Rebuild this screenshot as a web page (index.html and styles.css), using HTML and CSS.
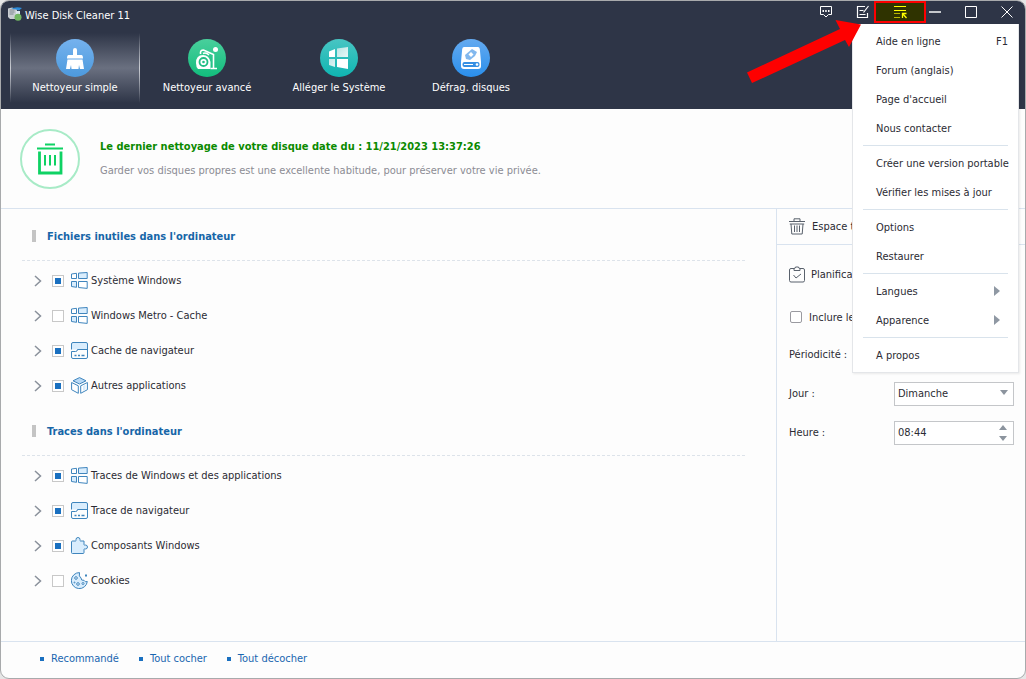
FILE: index.html
```html
<!DOCTYPE html>
<html lang="fr">
<head>
<meta charset="utf-8">
<title>Wise Disk Cleaner 11</title>
<link rel="stylesheet" href="styles.css">
</head>
<body>
<svg width="0" height="0" class="defs" aria-hidden="true">
  <defs>
    <linearGradient id="g-blue" x2="0" y2="1"><stop offset="0" stop-color="#75b2ee"/><stop offset="1" stop-color="#4d9add"/></linearGradient>
    <linearGradient id="g-green" x2="0" y2="1"><stop offset="0" stop-color="#49cf9c"/><stop offset="1" stop-color="#12bd7d"/></linearGradient>
    <linearGradient id="g-teal" x2="0" y2="1"><stop offset="0" stop-color="#48c5c3"/><stop offset="1" stop-color="#0fb5b1"/></linearGradient>
    <linearGradient id="g-sky" x2="0" y2="1"><stop offset="0" stop-color="#64aaf0"/><stop offset="1" stop-color="#2a8fec"/></linearGradient>
    <linearGradient id="g-pane" x2="1" y2="1"><stop offset="0" stop-color="#a5dfde"/><stop offset="1" stop-color="#fff"/></linearGradient>
    <symbol id="i-chev" viewBox="0 0 8 12"><path d="M1 1l5.500 5L1 11" fill="none" stroke="#8a919b" stroke-width="1.500"/></symbol>
    <symbol id="i-win" viewBox="0 0 17 17"><g fill="#fff" stroke="#3f85bd"><path d="M.5 2L5.500 1.300V6.500H.5z"/><path d="M7.500 1.100L16.200.5V6.500H7.500z" fill="#d9edfd"/><path d="M.5 9.500H5.500V15.300L.5 14.500z" fill="#d9edfd"/><path d="M7.500 9.500H16.200V16.400L7.500 15.500z"/></g></symbol>
    <symbol id="i-nav" viewBox="0 0 17 17"><path d="M.5 7.500V2Q.5.500 2 .5H15Q16.500.5 16.500 2V7.500z" fill="#d9edfd"/><path d="M.5 7.500V2Q.5.500 2 .5H15Q16.500.5 16.500 2V15Q16.500 16.500 15 16.500H2Q.5 16.500.5 15V9.500H4.500Q6.500 9.500 6.500 7.500H16.500" fill="none" stroke="#3f85bd"/><path d="M3.500 13.500h2m1.500 0h2m1.500 0h3" stroke="#3f85bd" stroke-width="1.500"/></symbol>
    <symbol id="i-cube" viewBox="0 0 17 17"><g fill="#fff" stroke="#3f85bd" stroke-linejoin="round"><path d="M8.500.6L15 3.800L8.500 7L2 3.800z" fill="#b9daf6"/><path d="M.6 5.500L7.300 8.800V16.300L.6 12.700z"/><path d="M16.400 5.500L9.700 8.800V16.300L16.400 12.700z"/><path d="M12 9L14.500 7.800V12.500L12 13.700z" fill="#d9edfd" stroke="none"/></g></symbol>
    <symbol id="i-puz" viewBox="0 0 17 17"><path d="M1.500 4H4.500Q5.300 4 5 2.500Q5 .5 7 .5T9 2.500Q8.800 4 9.500 4H13V7.500Q13 8.500 14.300 8Q16.500 8 16.500 10T14.300 12Q13 11.500 13 12.500V15.500Q13 16.500 12 16.500H1.500Q.5 16.500.5 15.500V5Q.5 4 1.500 4z" fill="#d9edfd" stroke="#3f85bd"/></symbol>
    <symbol id="i-cook" viewBox="0 0 17 17"><path d="M8.500.6A8 8 0 1 0 16.300 9.500Q14 10.500 13 8.300Q10 9 10 6Q7.500 4.500 8.500.6z" fill="#d9edfd" stroke="#3f85bd"/><g fill="#fff" stroke="#3f85bd"><circle cx="5" cy="6" r="1.300"/><circle cx="7" cy="12" r="1.300"/><circle cx="12" cy="11.500" r="1"/><circle cx="3.500" cy="10.500" r=".5"/></g><path d="M14 2.500h2v2h-2z" fill="#3f85bd"/></symbol>
  </defs>
</svg>
<div class="window">
  <header class="top">
    <div class="titlebar">
      <svg class="logo" width="14" height="14" viewBox="0 0 14 14"><path d="M0 1.500L4 .5L9 2V12H2L0 10z" fill="#c9cdd1"/><path d="M1.500 3h5m-5 2h5m-5 2h4" stroke="#7e8790"/><path d="M3 2Q8-1 14 1L11 3.500Q7 1.500 3 2z" fill="#2c8ad8"/><path d="M8 4h4v6H8z" fill="#dce5ec"/><circle cx="10" cy="10.300" r="3.500" fill="#72b762"/></svg>
      <h1 class="title">Wise Disk Cleaner 11</h1>
      <button class="tb" aria-label="Commentaires"><svg width="14" height="14" viewBox="0 0 14 14"><path d="M1.500 1.500h11v8h-3L7 12 4.500 9.500h-3z" fill="none" stroke="#fff"/><path d="M3.500 5h1.500v2H3.500zM6.200 5h1.500v2H6.200zM9 5h1.500v2H9z" fill="#fff"/></svg></button>
      <button class="tb" aria-label="Notes"><svg width="14" height="14" viewBox="0 0 14 14"><path d="M9 1.500H1.500v11h10V8M3.500 5.500h4m-4 4h6M12.500 1L7.500 7.500" fill="none" stroke="#fff" stroke-width="1.200"/></svg></button>
      <button class="tb active" aria-label="Menu" aria-expanded="true"><svg width="14" height="14" viewBox="0 0 14 14"><path d="M1 1.500h12M1 5.500h12" stroke="#ff0"/><path d="M1 8.500h6M1 12.500h6" stroke="#b8b800"/><path d="M9.500 13V8.500H13.500M9.500 8.500l4 4.500" fill="none" stroke="#ff0" stroke-width="1.300"/></svg></button>
      <button class="tb wc min" aria-label="Réduire"><svg width="12" height="12" viewBox="0 0 12 12"><path d="M0 6h12" stroke="#c4c7cc" stroke-width="2"/></svg></button>
      <button class="tb wc" aria-label="Agrandir"><svg width="12" height="12" viewBox="0 0 12 12"><path d="M.5.5h11v11H.5z" fill="none" stroke="#fff"/></svg></button>
      <button class="tb wc" aria-label="Fermer"><svg width="12" height="12" viewBox="0 0 12 12"><path d="M.5.500l11 11m0-11l-11 11" stroke="#fff"/></svg></button>
    </div>
    <nav class="tabs">
      <button class="tab selected"><svg width="38" height="38" viewBox="0 0 38 38"><circle cx="19" cy="19" r="19" fill="url(#g-blue)"/><path d="M17 16V11a2 2 0 0 1 4 0v5h4.500q1.500 0 1.500 3.500H11q0-3.500 1.500-3.500zM11.500 20.500h15l1.500 9.500h-4l-1-4-.5 4h-7l-.5-4-1 4H10z" fill="#fff"/></svg>Nettoyeur simple</button>
      <button class="tab"><svg width="38" height="38" viewBox="0 0 38 38"><circle cx="19" cy="19" r="19" fill="url(#g-green)"/><path d="M8 24Q8 16 15 16Q21 16 22.500 23V30H10Q8 28 8 24z" fill="#fff"/><circle cx="15.500" cy="23" r="4" fill="none" stroke="#22be85" stroke-width="1.800"/><circle cx="15.500" cy="23" r="1.300" fill="#22be85"/><path d="M12.500 15Q12 11 15.500 11L25.500 15.500V29.500M22.500 29.500h6.500M15 14.500Q18 13 21 16" fill="none" stroke="#fff" stroke-width="1.600"/><circle cx="27.500" cy="10.500" r="2.500" fill="#fff"/></svg>Nettoyeur avancé</button>
      <button class="tab"><svg width="38" height="38" viewBox="0 0 38 38"><circle cx="19" cy="19" r="19" fill="url(#g-teal)"/><path d="M9 12.500l6-2.500v8H9z" fill="#fff"/><path d="M17 9.500L28 8v10H17zM9 20h6v8l-6-2z" fill="url(#g-pane)"/><path d="M17 20h11v10l-11-2z" fill="#fff"/></svg>Alléger le Système</button>
      <button class="tab"><svg width="38" height="38" viewBox="0 0 38 38"><circle cx="19" cy="19" r="19" fill="url(#g-sky)"/><path d="M12 8h14q1.500 0 1.800 2L29 23v4q0 3-3 3H12q-3 0-3-3v-4l1.200-13Q10.500 8 12 8z" fill="#fff"/><rect x="10.500" y="23" width="17" height="5" rx="2" fill="#368fe3"/><path d="M12 25.500h9" stroke="#fff"/><circle cx="25" cy="25.500" r="1.300" fill="#fff"/><path d="M13 16l7-6 5 3-2 4-5 4-4-1z" fill="#82b8ee"/><path d="M19 13l2.500 2.500L19 18l-2.500-2.500z" fill="#fff"/></svg>Défrag. disques</button>
    </nav>
  </header>

  <section class="banner">
    <svg width="60" height="60" viewBox="0 0 60 60"><circle cx="30" cy="30" r="29" fill="#fff" stroke="#a8ebc7" stroke-width="2"/><path d="M25 15.500h10M17 19.500h26" stroke="#0fd264" stroke-width="2"/><path d="M19.500 22.500V44h21.500V22.500" fill="none" stroke="#0fd264" stroke-width="2.800"/><path d="M25 26v10.500m5-10.500v10.500m5-10.500v10.500" stroke="#0fd264" stroke-width="2"/></svg>
    <div class="banner-text">
      <h2>Le dernier nettoyage de votre disque date du : 11/21/2023 13:37:26</h2>
      <p>Garder vos disques propres est une excellente habitude, pour préserver votre vie privée.</p>
    </div>
  </section>

  <main class="content">
    <div class="lists">
      <section>
        <h3 class="group">Fichiers inutiles dans l'ordinateur</h3>
        <ul>
          <li><svg class="chev"><use href="#i-chev"/></svg><label><input type="checkbox" checked><svg class="ico"><use href="#i-win"/></svg>Système Windows</label></li>
          <li><svg class="chev"><use href="#i-chev"/></svg><label><input type="checkbox"><svg class="ico"><use href="#i-win"/></svg>Windows Metro - Cache</label></li>
          <li><svg class="chev"><use href="#i-chev"/></svg><label><input type="checkbox" checked><svg class="ico"><use href="#i-nav"/></svg>Cache de navigateur</label></li>
          <li><svg class="chev"><use href="#i-chev"/></svg><label><input type="checkbox" checked><svg class="ico"><use href="#i-cube"/></svg>Autres applications</label></li>
        </ul>
      </section>
      <section>
        <h3 class="group">Traces dans l'ordinateur</h3>
        <ul>
          <li><svg class="chev"><use href="#i-chev"/></svg><label><input type="checkbox" checked><svg class="ico"><use href="#i-win"/></svg>Traces de Windows et des applications</label></li>
          <li><svg class="chev"><use href="#i-chev"/></svg><label><input type="checkbox" checked><svg class="ico"><use href="#i-nav"/></svg>Trace de navigateur</label></li>
          <li><svg class="chev"><use href="#i-chev"/></svg><label><input type="checkbox" checked><svg class="ico"><use href="#i-puz"/></svg>Composants Windows</label></li>
          <li><svg class="chev"><use href="#i-chev"/></svg><label><input type="checkbox"><svg class="ico"><use href="#i-cook"/></svg>Cookies</label></li>
        </ul>
      </section>
    </div>
    <aside class="side">
      <div class="space"><svg width="16" height="17" viewBox="0 0 16 17"><path d="M5 3V.8h6V3M0 3.500h16M.8 6h14.400M2 6l.8 10h10.400L14 6M5.500 7.500V14M8 7.500V14m2.500-6.500V14" fill="none" stroke="#59616c"/></svg>Espace t</div>
      <div class="plan"><svg width="16" height="17" viewBox="0 0 16 17"><path d="M5 2.500H2Q.5 2.500.5 4v10.500Q.5 16 2 16h12q1.500 0 1.500-1.500V4Q15.500 2.500 14 2.500h-3M5 4.500v-2Q6.500 2.500 6.500 1h3q0 1.500 1.500 1.500v2zM4.500 9l2.500 3 5-4" fill="none" stroke="#59616c"/></svg>Planifica</div>
      <div class="incl"><label><input class="soft" type="checkbox">Inclure le</label></div>
      <div class="field"><span>Périodicité :</span></div>
      <div class="field"><label for="day">Jour :</label><span class="box"><select id="day"><option>Dimanche</option></select><svg class="down" width="8" height="5" viewBox="0 0 8 5"><path d="M0 0h8L4 5z" fill="#8c949e"/></svg></span></div>
      <div class="field"><label for="hour">Heure :</label><span class="box"><input id="hour" type="text" value="08:44"><svg class="spin" width="8" height="16" viewBox="0 0 8 16"><path d="M0 5h8L4 0zM0 11h8l-4 5z" fill="#8c949e"/></svg></span></div>
    </aside>
  </main>

  <footer class="foot">
    <a href="#">Recommandé</a><a href="#">Tout cocher</a><a href="#">Tout décocher</a>
  </footer>

  <div class="menu" role="menu">
    <button role="menuitem">Aide en ligne<span>F1</span></button>
    <button role="menuitem">Forum (anglais)</button>
    <button role="menuitem">Page d'accueil</button>
    <button role="menuitem">Nous contacter</button>
    <hr>
    <button role="menuitem">Créer une version portable</button>
    <button role="menuitem">Vérifier les mises à jour</button>
    <hr>
    <button role="menuitem">Options</button>
    <button role="menuitem">Restaurer</button>
    <hr>
    <button role="menuitem">Langues<svg class="sub" width="6" height="10" viewBox="0 0 6 10"><path d="M0 0l6 5-6 5z" fill="#8f98a3"/></svg></button>
    <button role="menuitem">Apparence<svg class="sub" width="6" height="10" viewBox="0 0 6 10"><path d="M0 0l6 5-6 5z" fill="#8f98a3"/></svg></button>
    <hr>
    <button role="menuitem">A propos</button>
  </div>
  <svg class="arrow" width="116" height="65" viewBox="0 0 116 65"><path d="M1 53.500L94 10L89.500 1L115 5.500L103 28L99 21L6 64z" fill="#fe0000"/></svg>
</div>
</body>
</html>
```
FILE: styles.css
```css
* { box-sizing: border-box; }
body {
  margin: 0;
  background: #e6e6e6;
  color: #2b2b33;
  font: 11px/15px "DejaVu Sans Condensed", "DejaVu Sans", sans-serif;
}
button, input, select { font: inherit; color: inherit; }
button { border: 0; background: none; padding: 0; }
h1, h2, h3, p, ul { margin: 0; padding: 0; font-size: inherit; }
ul { list-style: none; }
svg { flex: none; }
.defs { position: absolute; }

.window {
  position: relative;
  display: flex;
  flex-direction: column;
  min-height: 100vh;
  border: 1px solid #a8aaac;
  border-radius: 9px;
  background: #fdfdfd;
  overflow: hidden;
}

.top { background: #2e3547; color: #fff; height: 108px; }
.titlebar { display: flex; align-items: flex-start; height: 22px; }
.logo { margin: 6px 3px 0 7px; }
.title { flex: 1; font-weight: normal; margin-top: 7px; }
.tb { display: flex; align-items: center; justify-content: center; width: 37px; height: 22px; }
.tb.active { width: 52px; margin-left: -7px; border: 2px solid #fe0000; background: #2f3300; }
.tb.wc { width: 36px; }
.tb.wc.min { margin-left: -9px; }

.tabs { display: flex; gap: 2px; padding: 10px 0 0 9px; }
.tab {
  display: flex;
  flex-direction: column;
  align-items: center;
  gap: 3px;
  width: 130px;
  height: 70px;
  padding-top: 6px;
}
.tab.selected {
  background:
    linear-gradient(transparent, #c9ccd2, transparent) left / 1px 100% no-repeat,
    linear-gradient(transparent, #c9ccd2, transparent) right / 1px 100% no-repeat,
    linear-gradient(#2e3547, #6a7080 50%, #2e3547);
}

.banner {
  display: flex;
  align-items: center;
  gap: 20px;
  height: 100px;
  padding-left: 19px;
  border-bottom: 1px solid #d9e3ef;
}
.banner-text { display: grid; gap: 9px; }
.banner h2 { color: #0b8a00; font-weight: bold; }
.banner p { color: #8c8c94; }

.content { display: flex; flex: 1; }
.lists { flex: 1; padding: 0 31px 0 21px; }
.group {
  display: flex;
  align-items: center;
  gap: 11px;
  height: 52px;
  padding: 3px 0 0 10px;
  margin-bottom: 2px;
  border-bottom: 1px dashed #dde3ea;
  color: #1766a8;
}
.lists ul { padding-bottom: 1px; }
.group::before { content: ""; width: 4px; height: 12px; background: #c4c4c4; }
li { display: flex; align-items: center; gap: 10px; height: 35px; padding-left: 12px; }
li label { display: flex; align-items: center; }
.chev { width: 8px; height: 12px; }
.ico { width: 17px; height: 17px; margin: 0 3px 0 7px; }

input[type="checkbox"] {
  appearance: none;
  width: 12px;
  height: 12px;
  margin: 0;
  border: 1px solid #c8c8c8;
  background: #fff;
}
input[type="checkbox"]:checked { background: #1a70c0; box-shadow: inset 0 0 0 2px #fff; }
input[type="checkbox"].soft { border-color: #9a9aa0; border-radius: 2px; }

.side { width: 249px; border-left: 1px solid #d9e3ef; }
.space, .plan, .incl, .incl label, .field { display: flex; align-items: center; }
.space { gap: 7px; height: 36px; padding-left: 12px; border-bottom: 1px solid #d9e3ef; }
.plan { gap: 6px; height: 58px; padding-left: 12px; }
.incl { height: 28px; margin-bottom: 4px; padding-left: 13px; }
.incl label { gap: 7px; }
.field { justify-content: space-between; height: 39px; padding: 0 11px 0 12px; }
.box { position: relative; width: 120px; height: 24px; }
.box select, .box input {
  appearance: none;
  width: 100%;
  height: 100%;
  padding: 0 3px;
  border: 1px solid #c4c6c9;
  border-radius: 0;
  background: #fff;
}
.down { position: absolute; right: 6px; top: 8px; }
.spin { position: absolute; right: 7px; top: 4px; }

.foot { display: flex; gap: 20px; height: 37px; padding: 9px 0 0 39px; border-top: 1px solid #d9e3ef; }
.foot a { display: flex; align-items: center; gap: 7px; height: 15px; color: #1a66b0; text-decoration: none; }
.foot a::before { content: ""; width: 4px; height: 4px; background: #1a70c0; }

.menu {
  position: absolute;
  top: 23px;
  right: 6px;
  width: 167px;
  padding: 2px 0 3px;
  border: 1px solid #e4e6e9;
  border-top: 0;
  background: #fff;
  box-shadow: 1px 1px 2px rgba(0, 0, 0, .08);
}
.menu button {
  display: flex;
  align-items: center;
  justify-content: space-between;
  width: 100%;
  height: 29px;
  padding: 1px 10px 0 23px;
  white-space: nowrap;
}
.menu hr { height: 1px; margin: 3px 10px 2px; border: 0; background: #d9e3ec; }
.sub { margin-right: 8px; }
.arrow { position: absolute; top: 18px; right: 163px; }
```
